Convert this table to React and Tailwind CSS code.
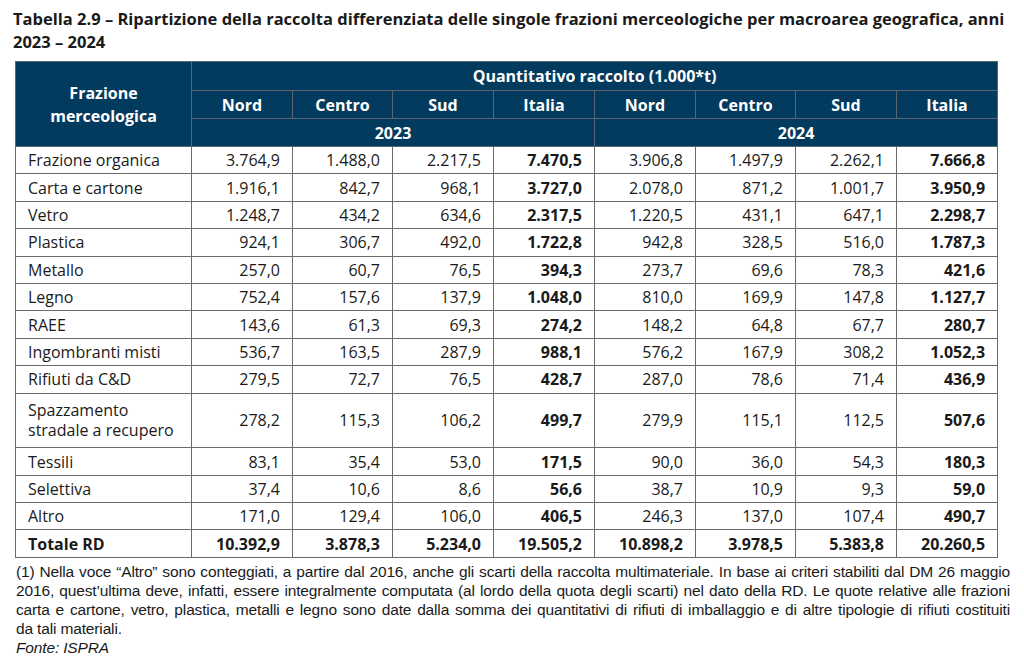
import React from "react";

const rows = [
  ["Frazione organica", "3.764,9", "1.488,0", "2.217,5", "7.470,5", "3.906,8", "1.497,9", "2.262,1", "7.666,8"],
  ["Carta e cartone", "1.916,1", "842,7", "968,1", "3.727,0", "2.078,0", "871,2", "1.001,7", "3.950,9"],
  ["Vetro", "1.248,7", "434,2", "634,6", "2.317,5", "1.220,5", "431,1", "647,1", "2.298,7"],
  ["Plastica", "924,1", "306,7", "492,0", "1.722,8", "942,8", "328,5", "516,0", "1.787,3"],
  ["Metallo", "257,0", "60,7", "76,5", "394,3", "273,7", "69,6", "78,3", "421,6"],
  ["Legno", "752,4", "157,6", "137,9", "1.048,0", "810,0", "169,9", "147,8", "1.127,7"],
  ["RAEE", "143,6", "61,3", "69,3", "274,2", "148,2", "64,8", "67,7", "280,7"],
  ["Ingombranti misti", "536,7", "163,5", "287,9", "988,1", "576,2", "167,9", "308,2", "1.052,3"],
  ["Rifiuti da C&D", "279,5", "72,7", "76,5", "428,7", "287,0", "78,6", "71,4", "436,9"],
  ["Spazzamento stradale a recupero", "278,2", "115,3", "106,2", "499,7", "279,9", "115,1", "112,5", "507,6"],
  ["Tessili", "83,1", "35,4", "53,0", "171,5", "90,0", "36,0", "54,3", "180,3"],
  ["Selettiva", "37,4", "10,6", "8,6", "56,6", "38,7", "10,9", "9,3", "59,0"],
  ["Altro", "171,0", "129,4", "106,0", "406,5", "246,3", "137,0", "107,4", "490,7"],
];

const total = ["Totale RD", "10.392,9", "3.878,3", "5.234,0", "19.505,2", "10.898,2", "3.978,5", "5.383,8", "20.260,5"];

const areas = ["Nord", "Centro", "Sud", "Italia", "Nord", "Centro", "Sud", "Italia"];

const th = "border border-[#5c6670] text-white font-bold text-center";
const td = "border border-[#6b6b6b] text-right pr-3";

const note = [
  "(1) Nella voce “Altro” sono conteggiati, a partire dal 2016, anche gli scarti della raccolta multimateriale. In base ai criteri stabiliti dal DM 26 maggio",
  "2016, quest’ultima deve, infatti, essere integralmente computata (al lordo della quota degli scarti) nel dato della RD. Le quote relative alle frazioni",
  "carta e cartone, vetro, plastica, metalli e legno sono date dalla somma dei quantitativi di rifiuti di imballaggio e di altre tipologie di rifiuti costituiti",
];

export default function App() {
  return (
    <div className="w-[1024px] h-[667px] bg-white px-[13px] pt-[7px] text-[#1a1a1a] font-['Open_Sans',sans-serif] overflow-hidden">
      <h1 className="text-[16.5px] leading-[23px] font-bold whitespace-nowrap">
        Tabella 2.9 – Ripartizione della raccolta differenziata delle singole frazioni merceologiche per macroarea geografica, anni
        <br />
        2023 – 2024
      </h1>

      <table className="mt-[8px] ml-[2px] table-fixed border-collapse w-[982px] text-[16px]">
        <colgroup>
          <col className="w-[176px]" />
          <col className="w-[101px]" />
          <col className="w-[100px]" />
          <col className="w-[101px]" />
          <col className="w-[101px]" />
          <col className="w-[101px]" />
          <col className="w-[100px]" />
          <col className="w-[101px]" />
          <col className="w-[101px]" />
        </colgroup>
        <thead className="bg-[#033b5e]">
          <tr className="h-[29px]">
            <th rowSpan={3} className={`${th} leading-[23px] pt-[2px]`}>
              Frazione
              <br />
              merceologica
            </th>
            <th colSpan={8} className={th}>
              Quantitativo raccolto (1.000*t)
            </th>
          </tr>
          <tr className="h-[28px]">
            {areas.map((a, i) => (
              <th key={i} className={th}>
                {a}
              </th>
            ))}
          </tr>
          <tr className="h-[28px]">
            <th colSpan={4} className={th}>
              2023
            </th>
            <th colSpan={4} className={th}>
              2024
            </th>
          </tr>
        </thead>
        <tbody>
          {rows.map((r) => {
            const tall = r[0].startsWith("Spazzamento");
            return (
              <tr key={r[0]} className={tall ? "h-[54.8px]" : "h-[27.4px]"}>
                <td className="border border-[#6b6b6b] pl-3 leading-[20px]">
                  {tall ? (
                    <>
                      Spazzamento
                      <br />
                      stradale a recupero
                    </>
                  ) : (
                    r[0]
                  )}
                </td>
                {r.slice(1).map((v, i) => (
                  <td key={i} className={`${td} ${i % 4 === 3 ? "font-bold" : ""}`}>
                    {v}
                  </td>
                ))}
              </tr>
            );
          })}
          <tr className="h-[28px] font-bold">
            <td className="border border-[#6b6b6b] pl-3">{total[0]}</td>
            {total.slice(1).map((v, i) => (
              <td key={i} className={td}>
                {v}
              </td>
            ))}
          </tr>
        </tbody>
      </table>

      <div className="mt-[4px] ml-[3px] w-[994px] text-[15.5px] leading-[19px] tracking-[-0.15px] font-['Liberation_Sans',sans-serif]">
        {note.map((l, i) => (
          <div key={i} className="text-justify [text-align-last:justify] whitespace-nowrap">
            {l}
          </div>
        ))}
        <div>da tali materiali.</div>
        <div className="italic">Fonte: ISPRA</div>
      </div>
    </div>
  );
}
